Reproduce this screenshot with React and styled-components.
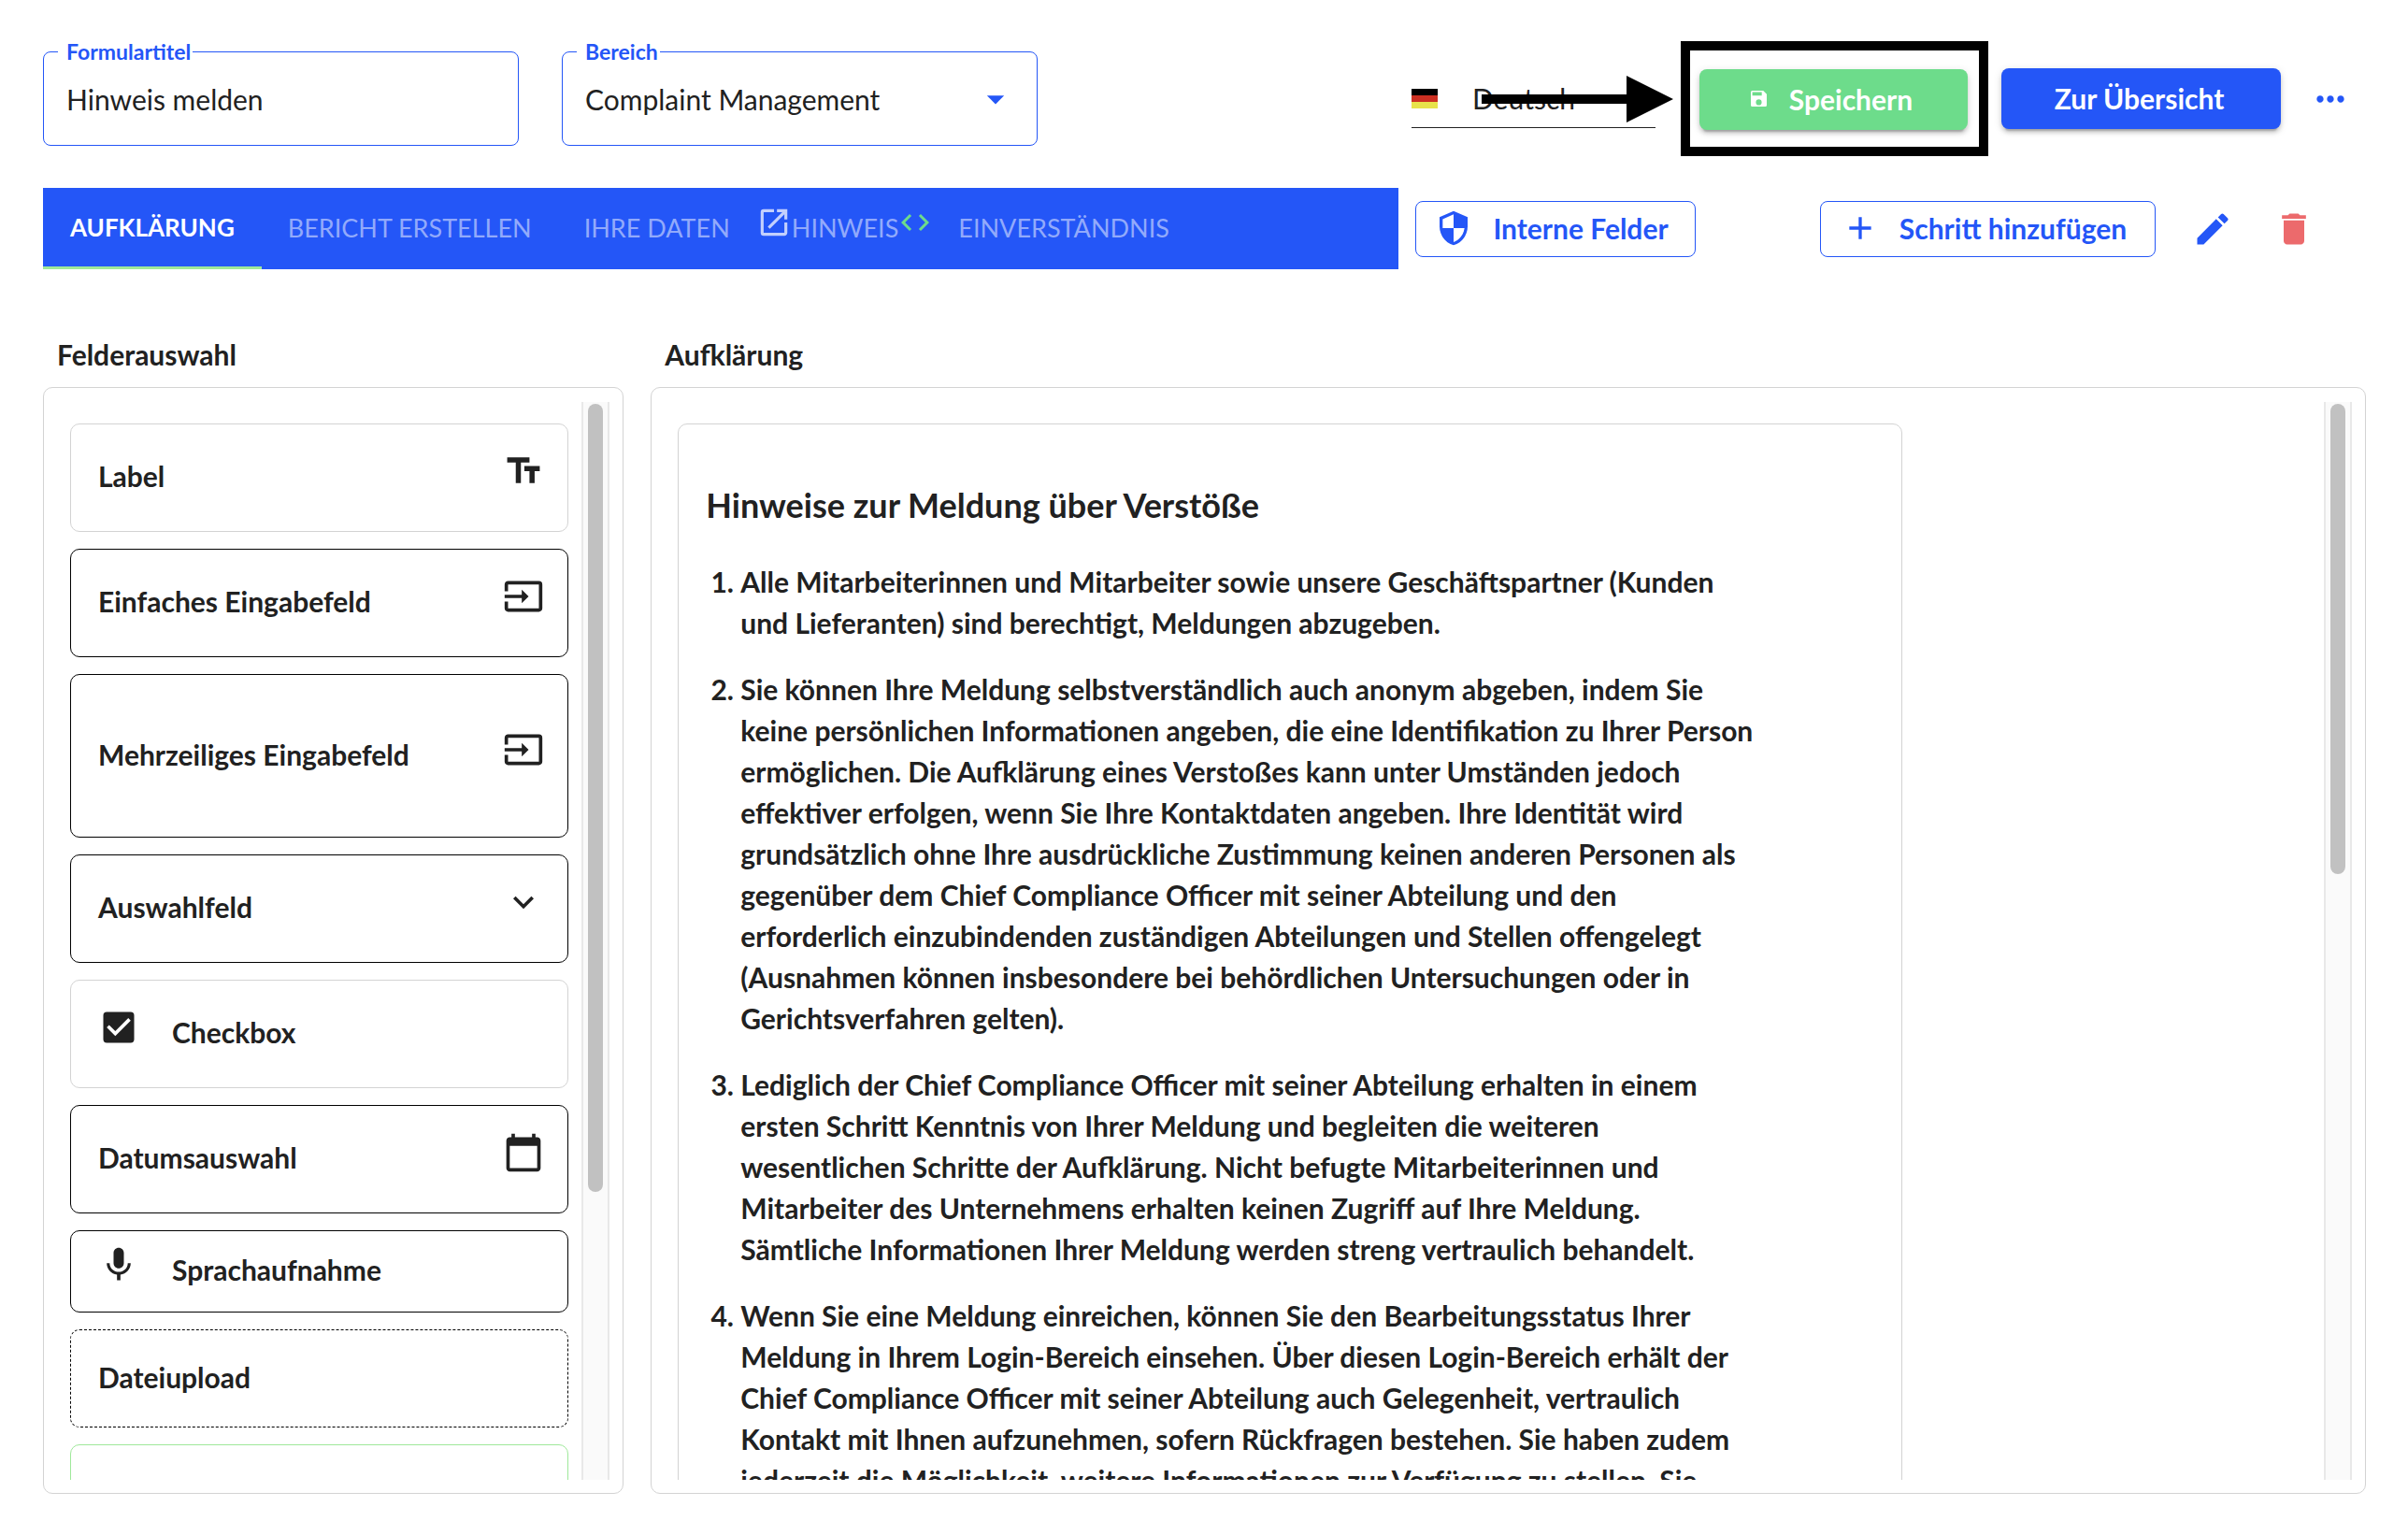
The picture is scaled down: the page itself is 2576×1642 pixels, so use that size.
import React from 'react'
import styled, { createGlobalStyle, css } from 'styled-components'
import {
    MdAdd,
    MdArrowDropDown,
    MdCalendarToday,
    MdCheckBox,
    MdCode,
    MdDelete,
    MdEdit,
    MdExpandMore,
    MdInput,
    MdMic,
    MdMoreHoriz,
    MdOpenInNew,
    MdSecurity,
    MdTextFields,
} from 'react-icons/md'

const fields = [
    { name: 'Label', icon: MdTextFields, size: 'medium', variant: 'light' },
    { name: 'Einfaches Eingabefeld', icon: MdInput, size: 'medium' },
    { name: 'Mehrzeiliges Eingabefeld', icon: MdInput, size: 'large' },
    { name: 'Auswahlfeld', icon: MdExpandMore, size: 'medium' },
    { name: 'Checkbox', icon: MdCheckBox, size: 'medium', variant: 'light', leading: true },
    { name: 'Datumsauswahl', icon: MdCalendarToday, size: 'medium' },
    { name: 'Sprachaufnahme', icon: MdMic, size: 'small', leading: true },
    { name: 'Dateiupload', size: 'upload', variant: 'dotted' },
    { name: '', size: 'medium', variant: 'green' },
]

const hints = [
    `Alle Mitarbeiterinnen und Mitarbeiter sowie unsere Geschäftspartner (Kunden
und Lieferanten) sind berechtigt, Meldungen abzugeben.`,
    `Sie können Ihre Meldung selbstverständlich auch anonym abgeben, indem Sie
keine persönlichen Informationen angeben, die eine Identifikation zu Ihrer Person
ermöglichen. Die Aufklärung eines Verstoßes kann unter Umständen jedoch
effektiver erfolgen, wenn Sie Ihre Kontaktdaten angeben. Ihre Identität wird
grundsätzlich ohne Ihre ausdrückliche Zustimmung keinen anderen Personen als
gegenüber dem Chief Compliance Officer mit seiner Abteilung und den
erforderlich einzubindenden zuständigen Abteilungen und Stellen offengelegt
(Ausnahmen können insbesondere bei behördlichen Untersuchungen oder in
Gerichtsverfahren gelten).`,
    `Lediglich der Chief Compliance Officer mit seiner Abteilung erhalten in einem
ersten Schritt Kenntnis von Ihrer Meldung und begleiten die weiteren
wesentlichen Schritte der Aufklärung. Nicht befugte Mitarbeiterinnen und
Mitarbeiter des Unternehmens erhalten keinen Zugriff auf Ihre Meldung.
Sämtliche Informationen Ihrer Meldung werden streng vertraulich behandelt.`,
    `Wenn Sie eine Meldung einreichen, können Sie den Bearbeitungsstatus Ihrer
Meldung in Ihrem Login-Bereich einsehen. Über diesen Login-Bereich erhält der
Chief Compliance Officer mit seiner Abteilung auch Gelegenheit, vertraulich
Kontakt mit Ihnen aufzunehmen, sofern Rückfragen bestehen. Sie haben zudem
jederzeit die Möglichkeit, weitere Informationen zur Verfügung zu stellen. Sie`,
]

const SaveIcon = () => (
    <svg width="17" height="17" viewBox="0 0 16 16" fill="currentColor" aria-hidden="true">
        <path
            fillRule="evenodd"
            d="M1.500 0H12.500L16 3.500V14.500A1.500 1.500 0 0 1 14.500 16H1.500A1.500 1.500 0 0 1 0 14.500V1.500A1.500 1.500 0 0 1 1.500 0zM1.500 1.500V5H11V1.500zM8 8.800a2.900 2.900 0 1 0 0 5.800 2.900 2.900 0 0 0 0-5.800z"
        />
    </svg>
)

const Flag = () => (
    <svg width="28" height="21" viewBox="0 0 28 21" aria-hidden="true">
        <rect width="28" height="7" fill="#000000" />
        <rect y="7" width="28" height="7" fill="#cb2f22" />
        <rect y="14" width="28" height="7" fill="#e8e34a" />
    </svg>
)

const FieldCard = ({ field }) => {
    const Icon = field.icon
    return (
        <StyledCard $size={field.size} $variant={field.variant} $leading={field.leading}>
            <span>{field.name}</span>
            {Icon && (
                <StyledCardIcon>
                    <Icon size={44} />
                </StyledCardIcon>
            )}
        </StyledCard>
    )
}

const App = () => {
    return (
        <>
            <GlobalStyle />
            <StyledPage>
                <StyledHeader>
                    <StyledField>
                        <StyledFieldLabel htmlFor="title">Formulartitel</StyledFieldLabel>
                        <StyledInput id="title" defaultValue="Hinweis melden" />
                    </StyledField>
                    <StyledField>
                        <StyledFieldLabel htmlFor="area">Bereich</StyledFieldLabel>
                        <StyledSelect id="area" defaultValue="cm">
                            <option value="cm">Complaint Management</option>
                        </StyledSelect>
                        <MdArrowDropDown size={44} />
                    </StyledField>
                    <StyledActions>
                        <StyledLanguage>
                            <Flag />
                            <StyledSelect aria-label="Sprache" defaultValue="de">
                                <option value="de">Deutsch</option>
                            </StyledSelect>
                            <StyledArrow viewBox="0 0 205 50" aria-hidden="true">
                                <path d="M0 20h155V0l50 25-50 25V30H0z" />
                            </StyledArrow>
                        </StyledLanguage>
                        <StyledHighlight>
                            <StyledButton $color="#6ddc8b" $width={287}>
                                <SaveIcon />
                                Speichern
                            </StyledButton>
                        </StyledHighlight>
                        <StyledButton $color="#2456f7" $width={299}>
                            Zur Übersicht
                        </StyledButton>
                        <StyledIconButton aria-label="Mehr" $width={77}>
                            <MdMoreHoriz size={44} />
                        </StyledIconButton>
                    </StyledActions>
                </StyledHeader>

                <StyledStepRow>
                    <StyledTabs role="tablist">
                        <StyledTab role="tab" aria-selected="true" $active>
                            AUFKLÄRUNG
                        </StyledTab>
                        <StyledTab role="tab">BERICHT ERSTELLEN</StyledTab>
                        <StyledTab role="tab">IHRE DATEN</StyledTab>
                        <StyledTab role="tab" $compact>
                            <StyledTabIcon $color="#c3d0fd">
                                <MdOpenInNew size={38} />
                            </StyledTabIcon>
                            HINWEIS
                            <StyledTabIcon $color="#6ddc8b">
                                <MdCode size={36} />
                            </StyledTabIcon>
                        </StyledTab>
                        <StyledTab role="tab">EINVERSTÄNDNIS</StyledTab>
                    </StyledTabs>
                    <StyledOutlined $width={300}>
                        <MdSecurity size={40} />
                        Interne Felder
                    </StyledOutlined>
                    <StyledStepActions>
                        <StyledOutlined $width={359}>
                            <MdAdd size={40} />
                            Schritt hinzufügen
                        </StyledOutlined>
                        <StyledIconGroup>
                            <StyledIconButton aria-label="Bearbeiten" $width={80}>
                                <MdEdit size={44} />
                            </StyledIconButton>
                            <StyledIconButton
                                aria-label="Löschen"
                                $width={80}
                                $color="#ec6a6c"
                            >
                                <MdDelete size={44} />
                            </StyledIconButton>
                        </StyledIconGroup>
                    </StyledStepActions>
                </StyledStepRow>

                <StyledColumns>
                    <StyledColumn>
                        <StyledColumnTitle>Felderauswahl</StyledColumnTitle>
                        <StyledPanel>
                            <StyledScrollArea>
                                {fields.map((field, index) => (
                                    <FieldCard key={index} field={field} />
                                ))}
                            </StyledScrollArea>
                            <StyledTrack>
                                <StyledThumb $share="73.4%" />
                            </StyledTrack>
                        </StyledPanel>
                    </StyledColumn>
                    <StyledColumn>
                        <StyledColumnTitle>Aufklärung</StyledColumnTitle>
                        <StyledPanel>
                            <StyledScrollArea>
                                <StyledDocument>
                                    <StyledHeading>
                                        Hinweise zur Meldung über Verstöße
                                    </StyledHeading>
                                    <StyledList>
                                        {hints.map((hint, index) => (
                                            <li key={index}>{hint}</li>
                                        ))}
                                    </StyledList>
                                </StyledDocument>
                            </StyledScrollArea>
                            <StyledTrack>
                                <StyledThumb $share="43.8%" />
                            </StyledTrack>
                        </StyledPanel>
                    </StyledColumn>
                </StyledColumns>
            </StyledPage>
        </>
    )
}

export default App

const GlobalStyle = createGlobalStyle`
    * {
        box-sizing: border-box;
    }
    body {
        margin: 0;
        background: #ffffff;
        color: #212121;
        font-family: Lato, sans-serif;
        font-size: 30px;
    }
    button,
    input,
    select {
        font: inherit;
        color: inherit;
    }
    button {
        white-space: nowrap;
    }
    svg {
        flex-shrink: 0;
    }
`

const StyledPage = styled.div`
    display: flex;
    flex-direction: column;
    height: 100vh;
    padding: 44px 45px 44px 46px;
`

const StyledHeader = styled.header`
    display: flex;
    align-items: center;
    gap: 46px;
`

const StyledField = styled.div`
    position: relative;
    display: flex;
    align-items: center;
    width: 509px;
    height: 101px;
    padding: 0 22px 0 24px;
    border: 1px solid #2456f7;
    border-radius: 8px;
    color: #2456f7;
`

const StyledFieldLabel = styled.label`
    position: absolute;
    top: -14px;
    left: 15px;
    padding: 0 2px 0 9px;
    background: #ffffff;
    font-size: 23px;
    line-height: 26px;
    font-weight: 700;
`

const StyledInput = styled.input`
    flex: 1;
    min-width: 0;
    padding: 0;
    border: 0;
    outline: 0;
    background: none;
    color: #212121;
`

const StyledSelect = styled.select`
    flex: 1;
    min-width: 0;
    padding: 0;
    border: 0;
    outline: 0;
    appearance: none;
    background: none;
    color: #212121;
`

const StyledActions = styled.div`
    display: flex;
    align-items: center;
    margin-left: auto;
    gap: 14px;
`

const StyledLanguage = styled.div`
    position: relative;
    display: flex;
    align-items: center;
    gap: 37px;
    width: 261px;
    height: 62px;
    margin-right: 13px;
    border-bottom: 1px solid #212121;
`

/* pointer drawn over the language selection */
const StyledArrow = styled.svg`
    position: absolute;
    top: 6px;
    left: 75px;
    width: 205px;
    height: 50px;
    pointer-events: none;
`

const StyledHighlight = styled.div`
    padding: 20px 12px 18px 10px;
    border: 10px solid #000000;
`

const StyledButton = styled.button`
    display: flex;
    align-items: center;
    justify-content: center;
    gap: 24px;
    width: ${(props) => props.$width}px;
    height: 65px;
    padding: 0 4px 2px 0;
    border: 0;
    border-radius: 8px;
    background: ${(props) => props.$color};
    color: #ffffff;
    font-weight: 700;
    box-shadow:
        0 6px 2px -4px rgba(0, 0, 0, 0.2),
        0 4px 4px 0 rgba(0, 0, 0, 0.14),
        0 2px 10px 0 rgba(0, 0, 0, 0.12);
`

const StyledIconButton = styled.button`
    display: flex;
    align-items: center;
    justify-content: center;
    width: ${(props) => props.$width}px;
    height: 64px;
    padding: 0;
    border: 0;
    background: none;
    color: ${(props) => props.$color || '#2456f7'};
`

const StyledStepRow = styled.div`
    display: flex;
    align-items: center;
    margin-top: 34px;
`

const StyledTabs = styled.div`
    display: flex;
    flex: 1;
    height: 87px;
    margin-right: 18px;
    background: #2456f7;
`

const StyledTab = styled.button`
    display: flex;
    align-items: center;
    padding: ${(props) => (props.$compact ? '0' : '0 28px')};
    border: 0;
    border-bottom: 3px solid transparent;
    background: none;
    color: #92aafb;
    font-size: 27px;

    ${(props) =>
        props.$active &&
        css`
            padding: 0 29px;
            border-color: #9fe89a;
            color: #ffffff;
            font-size: 26px;
            font-weight: 700;
        `}
`

const StyledTabIcon = styled.span`
    display: flex;
    padding: 0 0 10px;
    color: ${(props) => props.$color};
`

const StyledOutlined = styled.button`
    display: flex;
    align-items: center;
    justify-content: center;
    gap: 22px;
    width: ${(props) => props.$width}px;
    height: 60px;
    padding: 0 8px 2px 0;
    border: 1px solid #2456f7;
    border-radius: 8px;
    background: none;
    color: #2456f7;
    font-weight: 700;
`

const StyledStepActions = styled.div`
    display: flex;
    align-items: center;
    gap: 21px;
    margin-left: 133px;
    padding-right: 37px;
`

const StyledIconGroup = styled.div`
    display: flex;
    gap: 7px;
`

const StyledColumns = styled.main`
    display: grid;
    grid-template-columns: 25% minmax(0, 1fr);
    gap: 29px;
    flex: 1;
    min-height: 0;
    margin-top: 73px;
`

const StyledColumn = styled.section`
    display: flex;
    flex-direction: column;
    min-height: 0;
`

const StyledColumnTitle = styled.h2`
    margin: 0;
    padding: 0 15px 17px;
    font-size: 30px;
    line-height: 36px;
    font-weight: 700;
`

const StyledPanel = styled.div`
    display: flex;
    flex: 1;
    min-height: 0;
    padding: 15px 14px 14px 28px;
    border: 1px solid #d3d3d3;
    border-radius: 10px;
`

const StyledScrollArea = styled.div`
    display: flex;
    flex-direction: column;
    flex: 1;
    gap: 18px;
    min-width: 0;
    margin-right: 14px;
    padding-top: 23px;
    overflow: hidden;
`

const StyledTrack = styled.div`
    width: 30px;
    padding: 2px 5px;
    border: solid #e8e8e8;
    border-width: 0 2px;
    background: #fafafa;
`

const StyledThumb = styled.div`
    height: ${(props) => props.$share};
    border-radius: 8px;
    background: #c1c1c1;
`

const heights = {
    small: 88,
    upload: 105,
    medium: 116,
    large: 175,
}

const borders = {
    light: '1px solid #d3d3d3',
    dotted: '1px dashed #000000',
    green: '1px solid #9fe89a',
}

const StyledCard = styled.div`
    display: flex;
    flex-shrink: 0;
    flex-direction: ${(props) => (props.$leading ? 'row-reverse' : 'row')};
    align-items: center;
    justify-content: ${(props) => (props.$leading ? 'flex-end' : 'space-between')};
    gap: 35px;
    height: ${(props) => heights[props.$size]}px;
    padding: 0 25px 4px 29px;
    border: ${(props) => borders[props.$variant] || '1px solid #000000'};
    border-radius: 10px;
    font-weight: 700;
`

const StyledCardIcon = styled.span`
    display: flex;
    padding-bottom: 10px;
`

const StyledDocument = styled.article`
    width: 75%;
    flex-shrink: 0;
    padding: 64px 29px;
    border: 1px solid #d3d3d3;
    border-radius: 10px;
`

const StyledHeading = styled.h3`
    margin: 0 0 38px;
    font-size: 36px;
    line-height: 44px;
    font-weight: 700;
`

const StyledList = styled.ol`
    display: flex;
    flex-direction: column;
    gap: 27px;
    margin: 0;
    padding-left: 37px;
    font-size: 30px;
    line-height: 44px;
    font-weight: 700;
    white-space: pre-line;
`
